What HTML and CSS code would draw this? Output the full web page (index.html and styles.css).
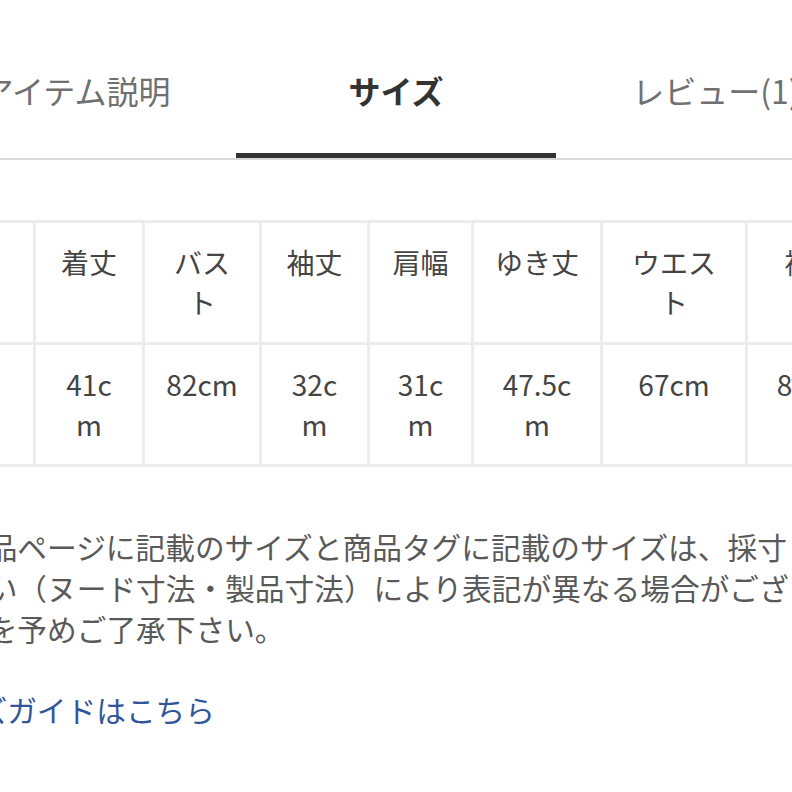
FILE: index.html
```html
<!DOCTYPE html>
<html lang="ja">
<head>
<meta charset="utf-8">
<title>サイズ</title>
<link rel="stylesheet" href="styles.css">
</head>
<body>
<div class="page">
  <nav class="tabs">
    <div class="tab">アイテム説明</div>
    <div class="tab active">サイズ</div>
    <div class="tab">レビュー(1)</div>
  </nav>

  <div class="size-table">
    <div class="cell"></div>
    <div class="cell">着丈</div>
    <div class="cell">バスト</div>
    <div class="cell">袖丈</div>
    <div class="cell">肩幅</div>
    <div class="cell">ゆき丈</div>
    <div class="cell">ウエスト</div>
    <div class="cell">裄丈</div>

    <div class="cell"></div>
    <div class="cell">41cm</div>
    <div class="cell">82cm</div>
    <div class="cell">32cm</div>
    <div class="cell">31cm</div>
    <div class="cell">47.5cm</div>
    <div class="cell">67cm</div>
    <div class="cell">82cm</div>
  </div>

  <p class="note">商品ページに記載のサイズと商品タグに記載のサイズは、採寸<br>違い（ヌード寸法・製品寸法）により表記が異なる場合がございます<br>事を予めご了承下さい。</p>

  <a class="guide-link" href="#">サイズガイドはこちら</a>
</div>
</body>
</html>
```

FILE: styles.css
```css
html, body {
  margin: 0;
  padding: 0;
  background: #ffffff;
}

body {
  font-family: "Noto Sans CJK JP", "Noto Sans", sans-serif;
}

.page {
  width: 792px;
  height: 792px;
  overflow: hidden;
}

.tabs {
  display: flex;
  width: 960px;
  margin-left: -84px;
  border-bottom: 2px solid #d9d9d9;
}

.tab {
  flex: 0 0 320px;
  text-align: center;
  padding: 70px 0 43px;
  font-size: 32px;
  line-height: 40px;
  color: #707070;
  border-bottom: 5px solid transparent;
  white-space: nowrap;
}

.tab.active {
  color: #333333;
  font-weight: 700;
  border-bottom-color: #333333;
}

.size-table {
  display: grid;
  grid-template-columns: 60px 106px 114px 105px 101px 126px 142px 129px;
  grid-template-rows: 119px 119px;
  gap: 3px;
  padding: 3px;
  background: #ececec;
  width: max-content;
  margin-top: 60px;
  margin-left: -30px;
}

.cell {
  background: #ffffff;
  padding: 19px 20px 0;
  text-align: center;
  font-size: 28px;
  line-height: 40px;
  color: #444444;
  word-break: break-all;
}

.note {
  margin: 59px 0 0 -42px;
  font-size: 29.7px;
  line-height: 41px;
  color: #595959;
  white-space: nowrap;
}

.guide-link {
  display: block;
  margin: 40px 0 0 -81px;
  font-size: 29.7px;
  line-height: 41px;
  color: #33569a;
  text-decoration: none;
  white-space: nowrap;
}
```
